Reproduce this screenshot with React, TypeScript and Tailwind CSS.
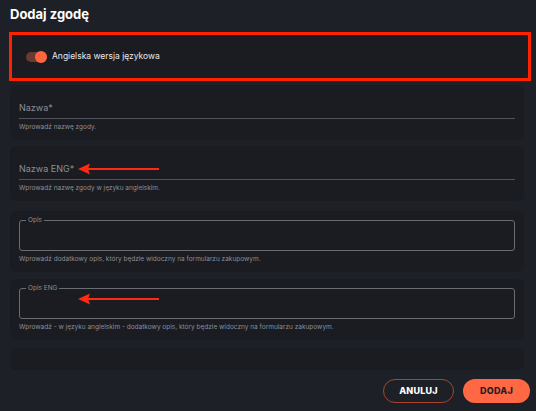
import React, { useState } from "react";

function Arrow({ top }: { top: number }) {
  return (
    <svg
      className="absolute left-[78px]"
      style={{ top }}
      width="82"
      height="12"
      viewBox="0 0 82 12"
    >
      <line x1="10" y1="6" x2="81" y2="6" stroke="#ff2a12" strokeWidth="2.2" />
      <polygon points="0,6 12,0.5 10,6 12,11.5" fill="#ff2a12" />
    </svg>
  );
}

function LineField({ label, help, className = "" }: { label: string; help: string; className?: string }) {
  return (
    <div className={`rounded-md bg-[#1a1c22] px-[9px] pt-[17px] pb-[8px] ${className}`}>
      <div className="border-b border-[#4f525a] pb-[4px] text-[9px] leading-[12px] text-[#8b8e96]">
        {label}
      </div>
      <p className="mt-[4px] text-[6.5px] leading-[9px] text-[#8b8e96]">{help}</p>
    </div>
  );
}

function AreaField({ label, help, className = "" }: { label: string; help: string; className?: string }) {
  return (
    <div className={`rounded-md bg-[#1a1c22] px-[9px] pt-[9px] pb-[8px] ${className}`}>
      <div className="relative h-[31px] rounded-[3px] border border-[#696c73]">
        <span className="absolute -top-[5px] left-[6px] bg-[#1a1c22] px-[2px] text-[6.5px] leading-[8px] text-[#8b8e96]">
          {label}
        </span>
      </div>
      <p className="mt-[4px] text-[6.5px] leading-[9px] text-[#8b8e96]">{help}</p>
    </div>
  );
}

export default function App() {
  const [english, setEnglish] = useState(true);

  return (
    <div
      className="relative h-[411px] w-[536px] overflow-hidden bg-[#1e2028] px-[10px] pt-[6px]"
      style={{ fontFamily: "Inter, 'Noto Sans', sans-serif" }}
    >
      <h1 className="text-[13px] font-bold leading-[16px] text-white">Dodaj zgodę</h1>

      <div className="mt-[10px] -mx-[1px] w-[522px] border-[3px] border-[#ff2200]">
        <div className="flex h-[43px] items-center gap-[5px] rounded-md bg-[#1a1c22] px-[14px]">
          <button
            onClick={() => setEnglish(!english)}
            className="relative h-[10px] w-[21px] rounded-full bg-[#6a3a31]"
          >
            <span
              className={
                english
                  ? "absolute right-0 top-1/2 h-[12px] w-[12px] -translate-y-1/2 rounded-full bg-[#ff6640]"
                  : "absolute left-0 top-1/2 h-[12px] w-[12px] -translate-y-1/2 rounded-full bg-[#9a9a9a]"
              }
            />
          </button>
          <span className="text-[8.5px] text-[#e8e8ea]">Angielska wersja językowa</span>
        </div>
      </div>

      <div className="mt-[4px] flex w-[514px] flex-col">
        <LineField label="Nazwa*" help="Wprowadź nazwę zgody." />
        <LineField
          className="mt-[6px]"
          label="Nazwa ENG*"
          help="Wprowadź nazwę zgody w języku angielskim."
        />
        <AreaField
          className="mt-[10px]"
          label="Opis"
          help="Wprowadź dodatkowy opis, który będzie widoczny na formularzu zakupowym."
        />
        <AreaField
          className="mt-[7px]"
          label="Opis ENG"
          help="Wprowadź - w języku angielskim - dodatkowy opis, który będzie widoczny na formularzu zakupowym."
        />
        <div className="mt-[8px] h-[22px] rounded-md bg-[#1a1c22]" />
      </div>

      <div className="mt-[9px] flex justify-end gap-[9px]">
        <button className="h-[24px] w-[71px] rounded-full border border-[#a8442c] text-[9px] font-extrabold tracking-wide text-white">
          ANULUJ
        </button>
        <button className="-mr-[4px] h-[24px] w-[67px] rounded-full bg-[#ff6842] text-[9px] font-extrabold tracking-wide text-[#1e2028]">
          DODAJ
        </button>
      </div>

      <Arrow top={163} />
      <Arrow top={293} />
    </div>
  );
}
